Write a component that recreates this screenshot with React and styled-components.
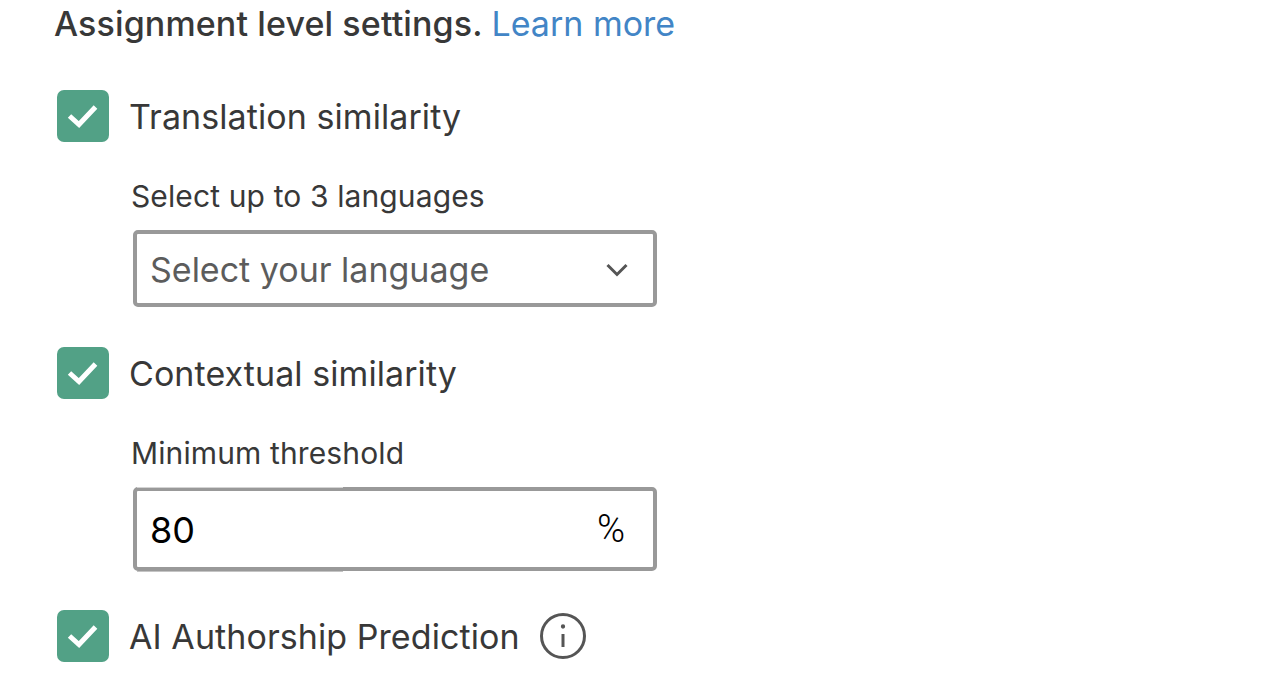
import { createGlobalStyle } from "styled-components";
import styled, { css } from "styled-components";

const Global = createGlobalStyle`
  html, body {
    margin: 0;
    height: 100%;
    background: #fff;
    overflow: hidden;
  }
  body {
    font-family: Inter, "Liberation Sans", sans-serif;
    color: #383838;
  }
`;

const Page = styled.main`
  display: flex;
  flex-direction: column;
  padding: 0 0 0 55px;
  height: 676px;
  box-sizing: border-box;
`;

const Intro = styled.p`
  margin: 0 0 0 -1px;
  height: 48px;
  line-height: 48px;
  font-size: 34px;
  font-weight: 500;
  letter-spacing: 0.12px;
  color: #383838;

  a {
    color: #4285c6;
    font-weight: 400;
    letter-spacing: 0;
    text-decoration: none;
  }
`;

const Option = styled.label`
  display: flex;
  align-items: center;
  gap: 21px;
  margin-top: ${(p) => p.$top}px;
  margin-left: 2px;
  height: 52px;
  font-size: 34px;
  letter-spacing: 0.07px;
  color: #383838;
`;

const Name = styled.span`
  margin-left: -1px;
`;

const Box = styled.span`
  width: 52px;
  height: 52px;
  flex: none;
  border-radius: 7px;
  background: #52a186;
  display: flex;
  align-items: center;
  justify-content: center;
`;

const Sub = styled.div`
  margin: 36px 0 0 76px;
  height: 36px;
  line-height: 36px;
  font-size: 30px;
  letter-spacing: 0.12px;
  color: #383838;
`;

const Field = styled.div`
  position: relative;
  display: flex;
  align-items: center;
  justify-content: space-between;
  box-sizing: border-box;
  width: 524px;
  height: ${(p) => p.$height}px;
  margin: 16px 0 0 78px;
  padding: 2px ${(p) => p.$right}px 0 13px;
  border: 4px solid #999;
  border-radius: 5px;
  background: #fff;
  font-size: ${(p) => p.$size}px;
  color: ${(p) => p.$color};

  ${(p) =>
    p.$seam &&
    css`
      &::before,
      &::after {
        content: "";
        position: absolute;
        left: 0;
        width: 206px;
        height: 1px;
      }
      &::before {
        top: -4px;
        background: #d4d4d4;
      }
      &::after {
        bottom: -5px;
        background: #c4c4c4;
      }
    `}
`;

const Unit = styled.span`
  font-family: Roboto, "Liberation Sans", sans-serif;
  font-size: 38px;
  font-weight: 300;
  margin-top: -2px;
  margin-right: 1px;
  color: #000;
`;

const Info = styled.svg`
  flex: none;
  margin-left: -1px;
`;

const Check = () => (
  <svg width="32" height="32" viewBox="0 0 32 32" fill="none" stroke="#fff" strokeWidth="5">
    <path d="M2.5 16 L12 24.5 L28.5 7" />
  </svg>
);

export default function App() {
  return (
    <Page>
      <Global />
      <Intro>
        Assignment level settings. <a href="#">Learn more</a>
      </Intro>
      <Option $top={42}>
        <Box><Check /></Box>
        <Name>Translation similarity</Name>
      </Option>
      <Sub>Select up to 3 languages</Sub>
      <Field $height={77} $size={34} $color="#5c5c5c" $right={24}>
        Select your language
        <svg width="24" height="24" viewBox="0 0 24 24" fill="none" stroke="#555" strokeWidth="3">
          <path d="M2.5 7 L12 16.5 L21.5 7" />
        </svg>
      </Field>
      <Option $top={40}>
        <Box><Check /></Box>
        <Name>Contextual similarity</Name>
      </Option>
      <Sub>Minimum threshold</Sub>
      <Field $height={84} $size={36} $color="#000" $right={27} $seam>
        80
        <Unit>%</Unit>
      </Field>
      <Option $top={39}>
        <Box><Check /></Box>
        <Name>AI Authorship Prediction</Name>
        <Info width="46" height="46" viewBox="0 0 46 46" fill="none" stroke="#555" strokeWidth="3">
          <circle cx="23" cy="23" r="21.5" />
          <path d="M23 21 V34" />
          <circle cx="23" cy="13.5" r="1.4" fill="#555" strokeWidth="1.5" />
        </Info>
      </Option>
    </Page>
  );
}
